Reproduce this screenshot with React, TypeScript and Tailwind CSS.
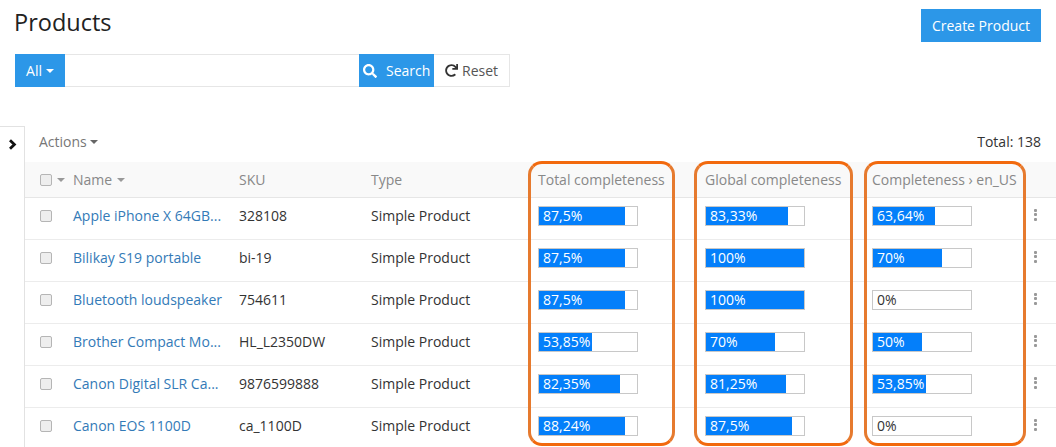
import React from "react";
import { FaSearch, FaRedo } from "react-icons/fa";

const rows = [
  { name: "Apple iPhone X 64GB...", sku: "328108", t: ["87,5%", 87.5], g: ["83,33%", 83.33], c: ["63,64%", 63.64] },
  { name: "Bilikay S19 portable", sku: "bi-19", t: ["87,5%", 87.5], g: ["100%", 100], c: ["70%", 70] },
  { name: "Bluetooth loudspeaker", sku: "754611", t: ["87,5%", 87.5], g: ["100%", 100], c: ["0%", 0] },
  { name: "Brother Compact Mo...", sku: "HL_L2350DW", t: ["53,85%", 53.85], g: ["70%", 70], c: ["50%", 50] },
  { name: "Canon Digital SLR Ca...", sku: "9876599888", t: ["82,35%", 82.35], g: ["81,25%", 81.25], c: ["53,85%", 53.85] },
  { name: "Canon EOS 1100D", sku: "ca_1100D", t: ["88,24%", 87.5], g: ["87,5%", 87.5], c: ["0%", 0] },
] as { name: string; sku: string; t: [string, number]; g: [string, number]; c: [string, number] }[];

function Caret({ className }: { className: string }) {
  return (
    <span
      className={`inline-block w-0 h-0 border-x-[4px] border-x-transparent border-t-[4px] ${className}`}
    />
  );
}

function Bar({ v }: { v: [string, number] }) {
  return (
    <div className="relative w-[100px] h-[20px] border border-[#c8c8c8] bg-white">
      <div className="h-full bg-[#047ffa]" style={{ width: `${v[1]}%` }} />
      <span className={`absolute left-[4px] top-0 leading-[18px] text-[14px] ${v[1] > 0 ? "text-white" : "text-[#333]"}`}>
        {v[0]}
      </span>
    </div>
  );
}

function Check() {
  return <span className="block w-[12px] h-[12px] rounded-[2px] border border-[#b5b5b5] bg-[#eeeeee]" />;
}

function Dots() {
  return (
    <span className="flex flex-col gap-[1.5px]">
      <span className="w-[3px] h-[3px] rounded-[1px] bg-[#999999]" />
      <span className="w-[3px] h-[3px] rounded-[1px] bg-[#999999]" />
      <span className="w-[3px] h-[3px] rounded-[1px] bg-[#999999]" />
    </span>
  );
}

const cols = "grid grid-cols-[48px_166px_132px_167px_167px_167px_153px_1fr] items-center";
const frame =
  "absolute top-[161px] h-[285px] rounded-[14px] border-[3px] border-[#e67a2e] border-t-[#f2690d] border-b-[#f2690d]";

export default function App() {
  return (
    <div className="relative h-[447px] w-[1056px] overflow-hidden bg-white text-[14px] text-[#333] font-['Open_Sans',sans-serif]">
      <div className="flex items-start justify-between pl-[14px] pr-[15px] pt-[9px]">
        <h1 className="text-[23.5px] leading-[26px] text-[#222]">Products</h1>
        <button className="w-[120px] h-[33px] bg-[#2c97e8] text-white text-[14px]">Create Product</button>
      </div>

      <div className="flex h-[33px] w-[495px] mx-[15px] mt-[12px]">
        <div className="flex w-[50px] items-center justify-center gap-[4px] bg-[#2c97e8] text-white">
          All <Caret className="border-t-white" />
        </div>
        <div className="w-[294px] border-y border-[#e6e6e6]" />
        <div className="flex w-[75px] items-center gap-[9px] bg-[#2c97e8] pl-[4px] text-white">
          <FaSearch className="text-[14px]" /> Search
        </div>
        <div className="flex flex-1 items-center gap-[4px] border border-l-0 border-[#e6e6e6] pl-[11px] text-[#555]">
          <FaRedo className="text-[13px] text-[#333]" /> Reset
        </div>
      </div>

      <div className="mt-[39px] flex h-[321px]">
        <div className="w-[25px] shrink-0 border-t border-r border-[#e2e2e2] pl-[8px] pt-[12px]">
          <svg width="9" height="11" viewBox="0 0 9 11" className="block">
            <path d="M2 1.2 L6.4 5.5 L2 9.8" fill="none" stroke="#111" strokeWidth="2.8" />
          </svg>
        </div>
        <div className="flex-1 min-w-0">
          <div className="flex h-[36px] items-center justify-between pl-[14px] pr-[15px] pb-[5px]">
            <span className="flex items-center gap-[3px] text-[#777]">
              Actions <Caret className="border-t-[#666]" />
            </span>
            <span className="text-[#333]">Total: 138</span>
          </div>
          <div className={`${cols} h-[36px] border-b border-[#e6e6e6] bg-[#f9f9f9] text-[#888]`}>
            <div className="flex items-center gap-[5px] pl-[15px]">
              <Check /> <Caret className="border-t-[#999]" />
            </div>
            <div className="flex items-center gap-[5px]">
              Name <Caret className="border-t-[#999]" />
            </div>
            <div>SKU</div>
            <div>Type</div>
            <div>Total completeness</div>
            <div>Global completeness</div>
            <div className="whitespace-nowrap">Completeness › en_US</div>
            <div />
          </div>
          {rows.map((r) => (
            <div key={r.name} className={`${cols} h-[42px] border-b border-[#ececec] pb-[6px]`}>
              <div className="pl-[15px]">
                <Check />
              </div>
              <div className="text-[#337ab7] whitespace-nowrap">{r.name}</div>
              <div>{r.sku}</div>
              <div>Simple Product</div>
              <Bar v={r.t} />
              <Bar v={r.g} />
              <Bar v={r.c} />
              <div className="pl-[9px] pb-[2px]">
                <Dots />
              </div>
            </div>
          ))}
        </div>
      </div>

      <div className={`${frame} left-[528px] w-[147px]`} />
      <div className={`${frame} left-[694px] w-[159px]`} />
      <div className={`${frame} left-[864px] w-[162px]`} />
    </div>
  );
}
